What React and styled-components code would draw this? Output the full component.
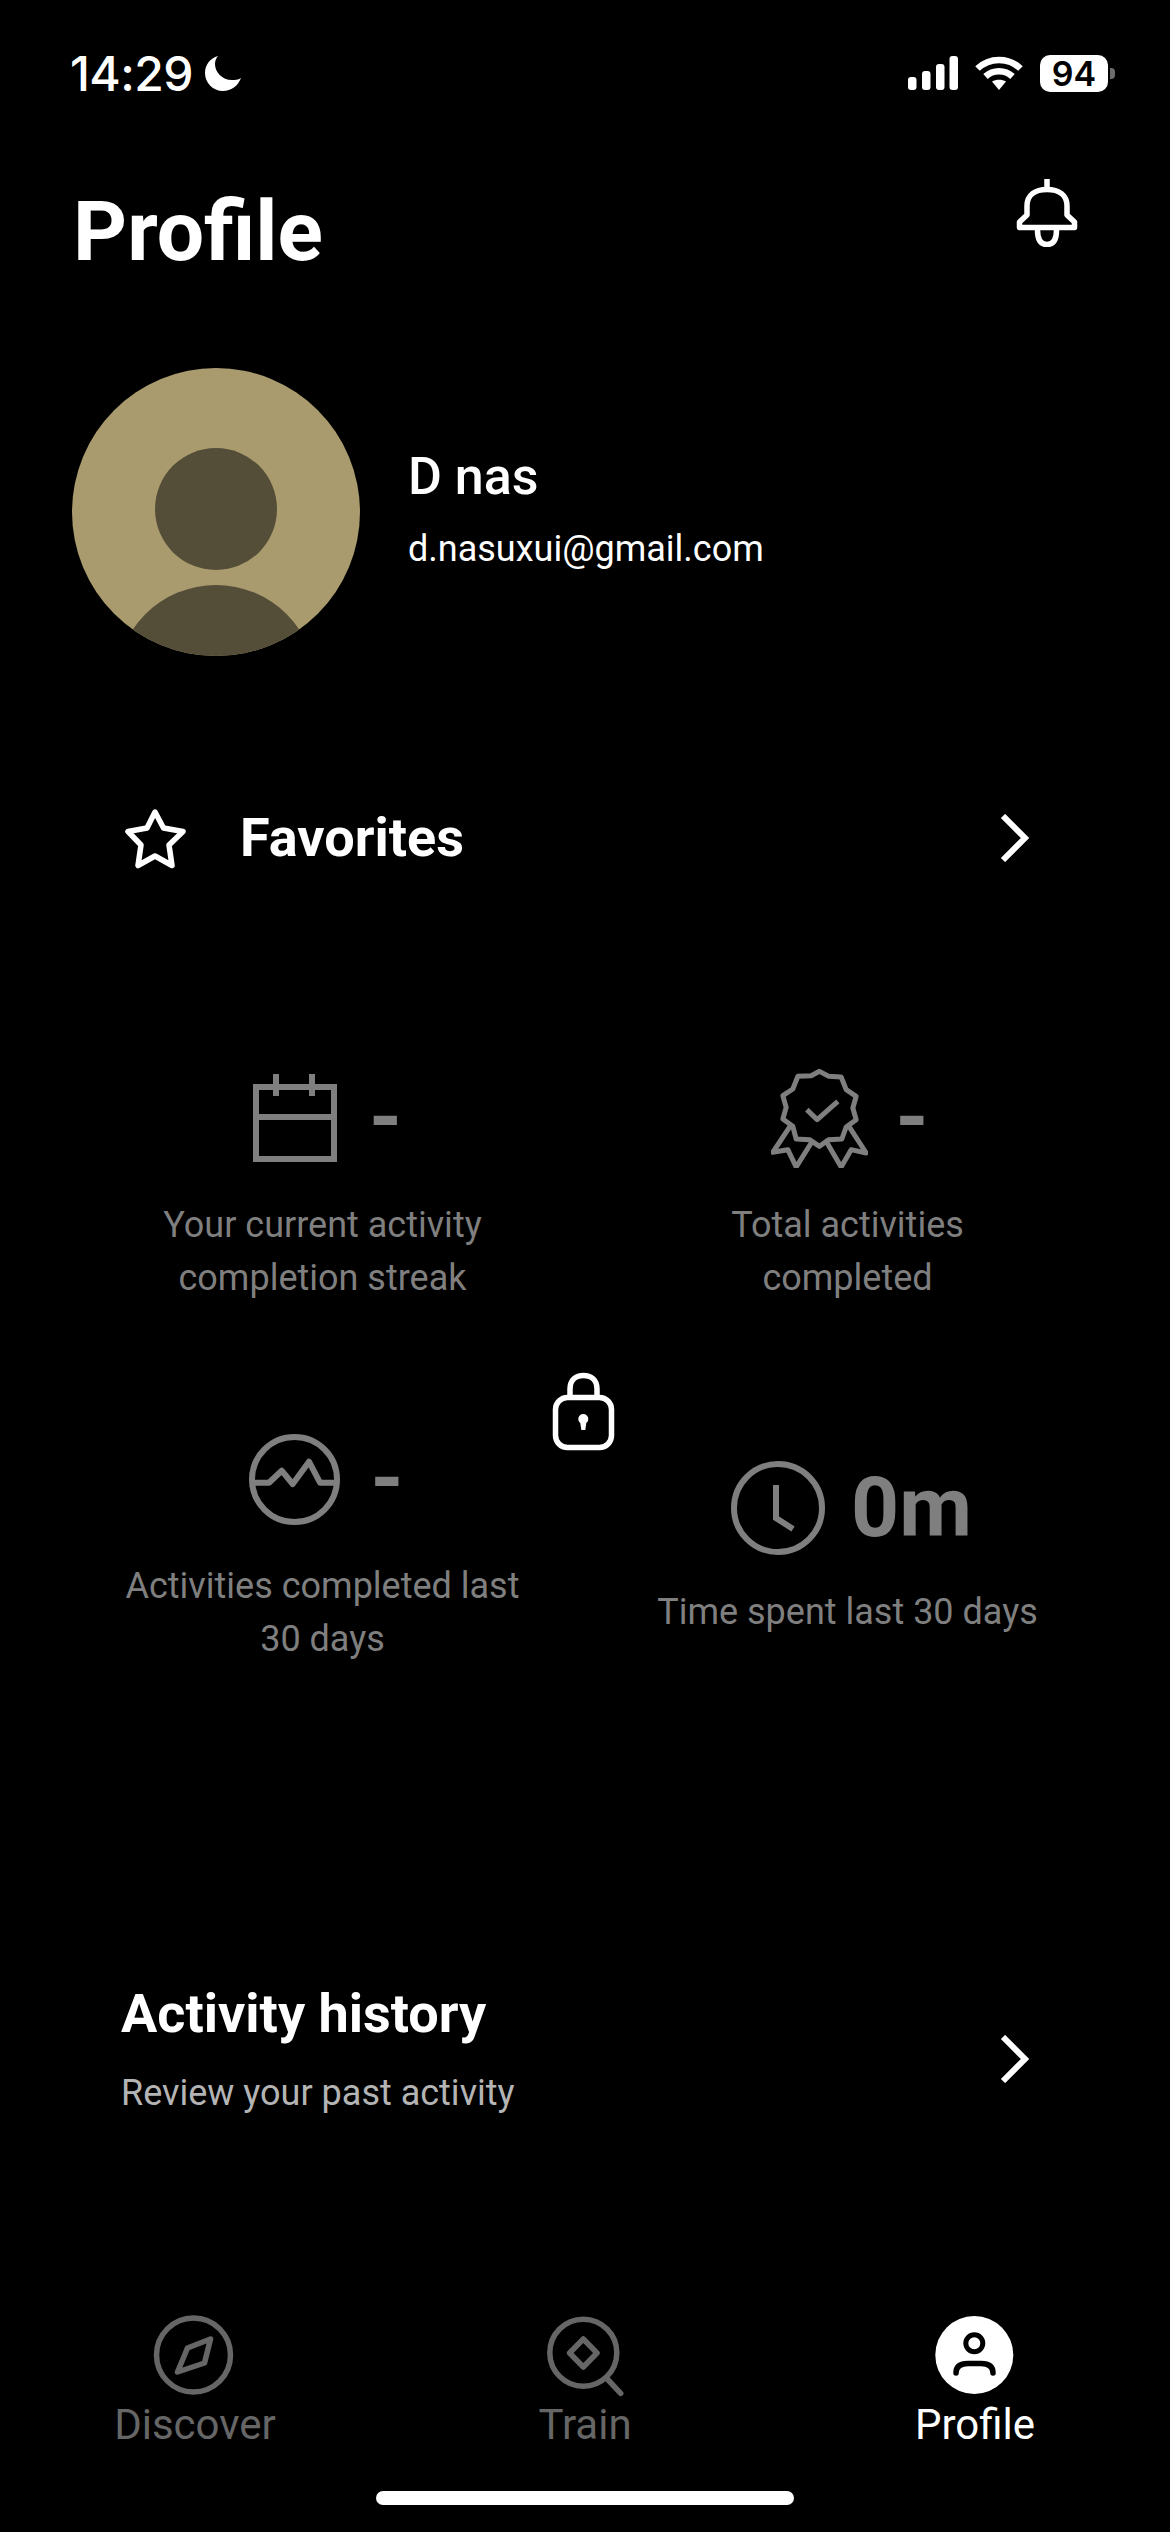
import React from "react";
import styled, { createGlobalStyle } from "styled-components";

const GlobalStyle = createGlobalStyle`
  html, body {
    margin: 0;
    padding: 0;
    background: #000;
  }
  * {
    box-sizing: border-box;
  }
`;

// --- Page ---
const Page = styled.div`
  width: 1170px;
  height: 2532px;
  background: #000;
  color: #fff;
  font-family: Roboto, "Liberation Sans", sans-serif;
  display: flex;
  flex-direction: column;
  overflow: hidden;
`;

// --- Status bar ---
const StatusBar = styled.div`
  height: 146px;
  padding: 0 62px 0 70px;
  display: flex;
  align-items: center;
  justify-content: space-between;
`;

const StatusLeft = styled.div`
  display: flex;
  align-items: center;
  gap: 12px;
`;

const Clock = styled.span`
  font-family: Inter, Roboto, sans-serif;
  font-size: 48px;
  font-weight: 500;
  letter-spacing: -0.6px;
`;

const StatusRight = styled.div`
  display: flex;
  align-items: center;
  gap: 17px;
`;

const Battery = styled.div`
  position: relative;
  width: 68px;
  height: 37px;
  border-radius: 10px;
  background: #fff;
  color: #000;
  display: flex;
  align-items: center;
  justify-content: center;
  font-family: Inter, Roboto, sans-serif;
  font-size: 34px;
  font-weight: 600;
  &::after {
    content: "";
    position: absolute;
    right: -7px;
    top: 13px;
    width: 5px;
    height: 11px;
    border-radius: 0 4px 4px 0;
    background: #6e6e6e;
  }
`;

// --- Header ---
const Header = styled.header`
  height: 222px;
  padding: 31px 91px 0 73px;
  display: flex;
  align-items: flex-start;
  justify-content: space-between;
`;

const Title = styled.h1`
  margin: 5px 0 0;
  font-size: 84px;
  line-height: 100px;
  font-weight: 700;
`;

// --- Profile ---
const ProfileRow = styled.section`
  height: 288px;
  padding-left: 72px;
  display: flex;
  align-items: center;
  gap: 48px;
`;

const Avatar = styled.div`
  position: relative;
  width: 288px;
  height: 288px;
  border-radius: 50%;
  background: #a99b6e;
  overflow: hidden;
  flex-shrink: 0;
  &::before {
    content: "";
    position: absolute;
    left: 83px;
    top: 80px;
    width: 122px;
    height: 122px;
    border-radius: 50%;
    background: #544d38;
  }
  &::after {
    content: "";
    position: absolute;
    left: 44px;
    top: 217px;
    width: 200px;
    height: 200px;
    border-radius: 50%;
    background: #544d38;
  }
`;

const ProfileText = styled.div`
  display: flex;
  flex-direction: column;
  gap: 20px;
  margin-top: -6px;
`;

const Name = styled.div`
  font-size: 52px;
  line-height: 60px;
  font-weight: 500;
`;

const Email = styled.div`
  font-size: 36px;
  line-height: 44px;
`;

// --- Link rows ---
const FavoritesRow = styled.div`
  margin-top: 134px;
  height: 96px;
  padding: 0 140px 0 120px;
  display: flex;
  align-items: center;
`;

const RowTitle = styled.div`
  font-size: 54px;
  line-height: 64px;
  font-weight: 700;
`;

const FavoritesTitle = styled(RowTitle)`
  margin-left: 50px;
  flex: 1;
`;

// --- Stats ---
const StatsGrid = styled.section`
  position: relative;
  margin-top: 186px;
  padding: 0 60px;
  display: grid;
  grid-template-columns: 525px 525px;
  row-gap: 128px;
  align-items: center;
`;

const Stat = styled.div`
  display: flex;
  flex-direction: column;
  align-items: center;
  text-align: center;
`;

const StatTop = styled.div`
  height: ${(p) => p.$height || 92}px;
  margin-bottom: ${(p) => p.$gap || 35}px;
  padding-left: ${(p) => p.$shift || 0}px;
  display: flex;
  align-items: center;
  justify-content: center;
  gap: ${(p) => p.$spacing || 32}px;
`;

const StatValue = styled.span`
  font-size: 84px;
  line-height: 92px;
  font-weight: 700;
  color: #7f7f7f;
`;

const StatLabel = styled.div`
  width: 400px;
  font-size: 36px;
  line-height: 53px;
  color: #7f7f7f;
`;

const LockBadge = styled.div`
  position: absolute;
  left: 550px;
  top: 298px;
  width: 68px;
  height: 84px;
`;

// --- History ---
const HistoryRow = styled.section`
  margin-top: 316px;
  padding: 0 140px 0 121px;
  display: flex;
  align-items: center;
  justify-content: space-between;
`;

const HistoryText = styled.div`
  display: flex;
  flex-direction: column;
  gap: 25px;
`;

const HistorySub = styled.div`
  font-size: 36px;
  line-height: 44px;
  color: #b4b4b4;
`;

const HistoryArrow = styled.div`
  display: flex;
  margin-top: 20px;
`;

// --- Tab bar ---
const TabBar = styled.nav`
  margin-top: auto;
  display: grid;
  grid-template-columns: repeat(3, 1fr);
`;

const Tab = styled.div`
  display: flex;
  flex-direction: column;
  align-items: center;
  color: ${(p) => (p.$active ? "#fff" : "#666")};
`;

const TabLabel = styled.span`
  font-size: 42px;
  line-height: 50px;
  margin-top: 5px;
`;

const HomeBar = styled.div`
  padding: 41px 0 27px;
  display: flex;
  justify-content: center;
`;

const HomeIndicator = styled.div`
  width: 418px;
  height: 14px;
  border-radius: 7px;
  background: #fff;
`;

// --- Icons ---
const Moon = () => (
  <svg width="36" height="36" viewBox="0 0 36 36" fill="#fff">
    <path d="M13 1C5 3 0 10 0 18c0 10 8 18 18 18 8 0 15-5 18-13-3 2-6 2-9 2-10 0-17-8-17-16 0-3 1-6 3-8z" />
  </svg>
);

const Signal = () => (
  <svg width="50" height="34" viewBox="0 0 50 34" fill="#fff">
    <rect x="0" y="21" width="8.5" height="13" rx="3" />
    <rect x="14" y="15" width="8.5" height="19" rx="3" />
    <rect x="28" y="8" width="8.5" height="26" rx="3" />
    <rect x="41.5" y="0" width="8.5" height="34" rx="3" />
  </svg>
);

const Wifi = () => (
  <svg width="48" height="35" viewBox="0 0 48 35" fill="none" stroke="#fff" strokeWidth="6.5">
    <path d="M2.5 12.5C14.5 1 33.5 1 45.5 12.5" />
    <path d="M10.5 20.5C18 13.5 30 13.5 37.5 20.5" />
    <path d="M17 25.5C21 23 27 23 31 25.5L24 34z" fill="#fff" stroke="none" />
  </svg>
);

const Bell = () => (
  <svg width="64" height="70" viewBox="15 7 64 70" fill="none" stroke="#fff" strokeWidth="5.5">
    <path d="M47 9v9" />
    <path d="M19.5 57.5V52L27 45V36C27 25 35 19.5 47 19.5S67 25 67 36V45L74.5 52V57.5z" strokeLinejoin="round" />
    <path d="M37.5 60C37.5 70 41 74.5 47 74.5S56.5 70 56.5 60" />
  </svg>
);

const Star = () => (
  <svg width="70" height="68" viewBox="10 8 70 68" fill="none" stroke="#fff" strokeWidth="5.5" strokeLinejoin="round">
    <path d="M45 16L53.5 32 73 35.5 59 49 62 69.5 45 60 28 69.5 31 49 18 35.5 37 32z" />
  </svg>
);

const Chevron = () => (
  <svg width="30" height="48" viewBox="0 0 30 48" fill="none" stroke="#fff" strokeWidth="6">
    <path d="M3 2l22 22L3 46" />
  </svg>
);

const CalendarIcon = () => (
  <svg width="84" height="88" viewBox="0 0 84 88" fill="none" stroke="#7f7f7f" strokeWidth="6">
    <path d="M3 13h78v72H3z" />
    <path d="M3 43h78" />
    <path d="M23 0v22M59 0v22" />
  </svg>
);

const AwardIcon = () => (
  <svg width="97" height="100" viewBox="90 85 290 300" fill="none" stroke="#7f7f7f" strokeWidth="15" strokeLinejoin="round">
    <path d="M235 95l28 15 37 2 15 38 30 20-10 35 10 35-30 22-13 36-40 2-27 20-30-20-40-2-10-38-30-22 10-35-10-35 30-20 15-38 40-2z" />
    <path d="M150 255L95 338l45-8 25 52 45-72" />
    <path d="M320 255l55 85-45-10-30 52-42-72" />
    <path d="M197 210l31 30 62-55" />
  </svg>
);

const PulseIcon = () => (
  <svg width="91" height="91" viewBox="8 14 91 91" fill="none" stroke="#7f7f7f" strokeWidth="6" strokeLinejoin="round">
    <circle cx="53.5" cy="59.5" r="42.5" />
    <path d="M13 62.7H28L40.7 50.7 51.7 64 68 41.7 79 62.7H93" />
  </svg>
);

const ClockIcon = () => (
  <svg width="94" height="94" viewBox="0 0 94 94" fill="none" stroke="#7f7f7f" strokeWidth="6">
    <circle cx="47" cy="47" r="44" />
    <path d="M45 24v33l17 11" />
  </svg>
);

const LockIcon = () => (
  <svg width="68" height="84" viewBox="10 10 68 84" fill="none" stroke="#fff" strokeWidth="5.5">
    <rect x="15.5" y="37.5" width="56" height="50" rx="12" />
    <path d="M30 37V29C30 20 36 15.5 43.5 15.5S57 20 57 29V37" />
    <path d="M38.3 59a5 5 0 1 1 10 0c0 2-1 3-2 4l-1 7h-4l-1-7c-1-1-2-2-2-4z" fill="#fff" stroke="none" />
  </svg>
);

const CompassIcon = () => (
  <svg width="80" height="80" viewBox="1.5 0 80 80" overflow="visible" fill="none" stroke="#666" strokeWidth="5.5">
    <circle cx="40" cy="40" r="37" />
    <path d="M57 24L34 33 24 57 51 48z" strokeLinejoin="round" />
  </svg>
);

const TrainIcon = () => (
  <svg width="80" height="80" viewBox="15 10 80 80" overflow="visible" fill="none" stroke="#666" strokeWidth="5.5" strokeLinecap="round" strokeLinejoin="round">
    <circle cx="53.3" cy="47.7" r="33.5" />
    <path d="M53.3 34L67 48 53.3 62 39.6 48z" />
    <path d="M77.3 74L90.7 88.3" />
  </svg>
);

const ProfileIcon = () => (
  <svg width="80" height="80" viewBox="9 11 80 80" fill="none">
    <circle cx="48.3" cy="51" r="39" fill="#fff" />
    <circle cx="48.3" cy="39.3" r="8.5" stroke="#000" strokeWidth="5" />
    <path d="M30 69C30 62 35 59.5 42 59.5H55C62 59.5 67 62 67 69" stroke="#000" strokeWidth="5.5" strokeLinecap="round" />
  </svg>
);

// --- Main ---
const App = () => (
  <Page>
    <GlobalStyle />
    <StatusBar>
      <StatusLeft>
        <Clock>14:29</Clock>
        <Moon />
      </StatusLeft>
      <StatusRight>
        <Signal />
        <Wifi />
        <Battery>94</Battery>
      </StatusRight>
    </StatusBar>

    <Header>
      <Title>Profile</Title>
      <Bell />
    </Header>

    <ProfileRow>
      <Avatar />
      <ProfileText>
        <Name>D nas</Name>
        <Email>d.nasuxui@gmail.com</Email>
      </ProfileText>
    </ProfileRow>

    <FavoritesRow>
      <Star />
      <FavoritesTitle>Favorites</FavoritesTitle>
      <Chevron />
    </FavoritesRow>

    <StatsGrid>
      <Stat>
        <StatTop $shift={10}>
          <CalendarIcon />
          <StatValue>-</StatValue>
        </StatTop>
        <StatLabel>Your current activity completion streak</StatLabel>
      </Stat>
      <Stat>
        <StatTop $shift={5} $spacing={27}>
          <AwardIcon />
          <StatValue>-</StatValue>
        </StatTop>
        <StatLabel>Total activities completed</StatLabel>
      </Stat>
      <Stat>
        <StatTop $shift={8} $spacing={30}>
          <PulseIcon />
          <StatValue>-</StatValue>
        </StatTop>
        <StatLabel>Activities completed last 30 days</StatLabel>
      </Stat>
      <Stat>
        <StatTop $height={94} $gap={31} $shift={8} $spacing={26}>
          <ClockIcon />
          <StatValue>0m</StatValue>
        </StatTop>
        <StatLabel>Time spent last 30 days</StatLabel>
      </Stat>
      <LockBadge>
        <LockIcon />
      </LockBadge>
    </StatsGrid>

    <HistoryRow>
      <HistoryText>
        <RowTitle>Activity history</RowTitle>
        <HistorySub>Review your past activity</HistorySub>
      </HistoryText>
      <HistoryArrow>
        <Chevron />
      </HistoryArrow>
    </HistoryRow>

    <TabBar>
      <Tab>
        <CompassIcon />
        <TabLabel>Discover</TabLabel>
      </Tab>
      <Tab>
        <TrainIcon />
        <TabLabel>Train</TabLabel>
      </Tab>
      <Tab $active>
        <ProfileIcon />
        <TabLabel>Profile</TabLabel>
      </Tab>
    </TabBar>
    <HomeBar>
      <HomeIndicator />
    </HomeBar>
  </Page>
);

export default App;
